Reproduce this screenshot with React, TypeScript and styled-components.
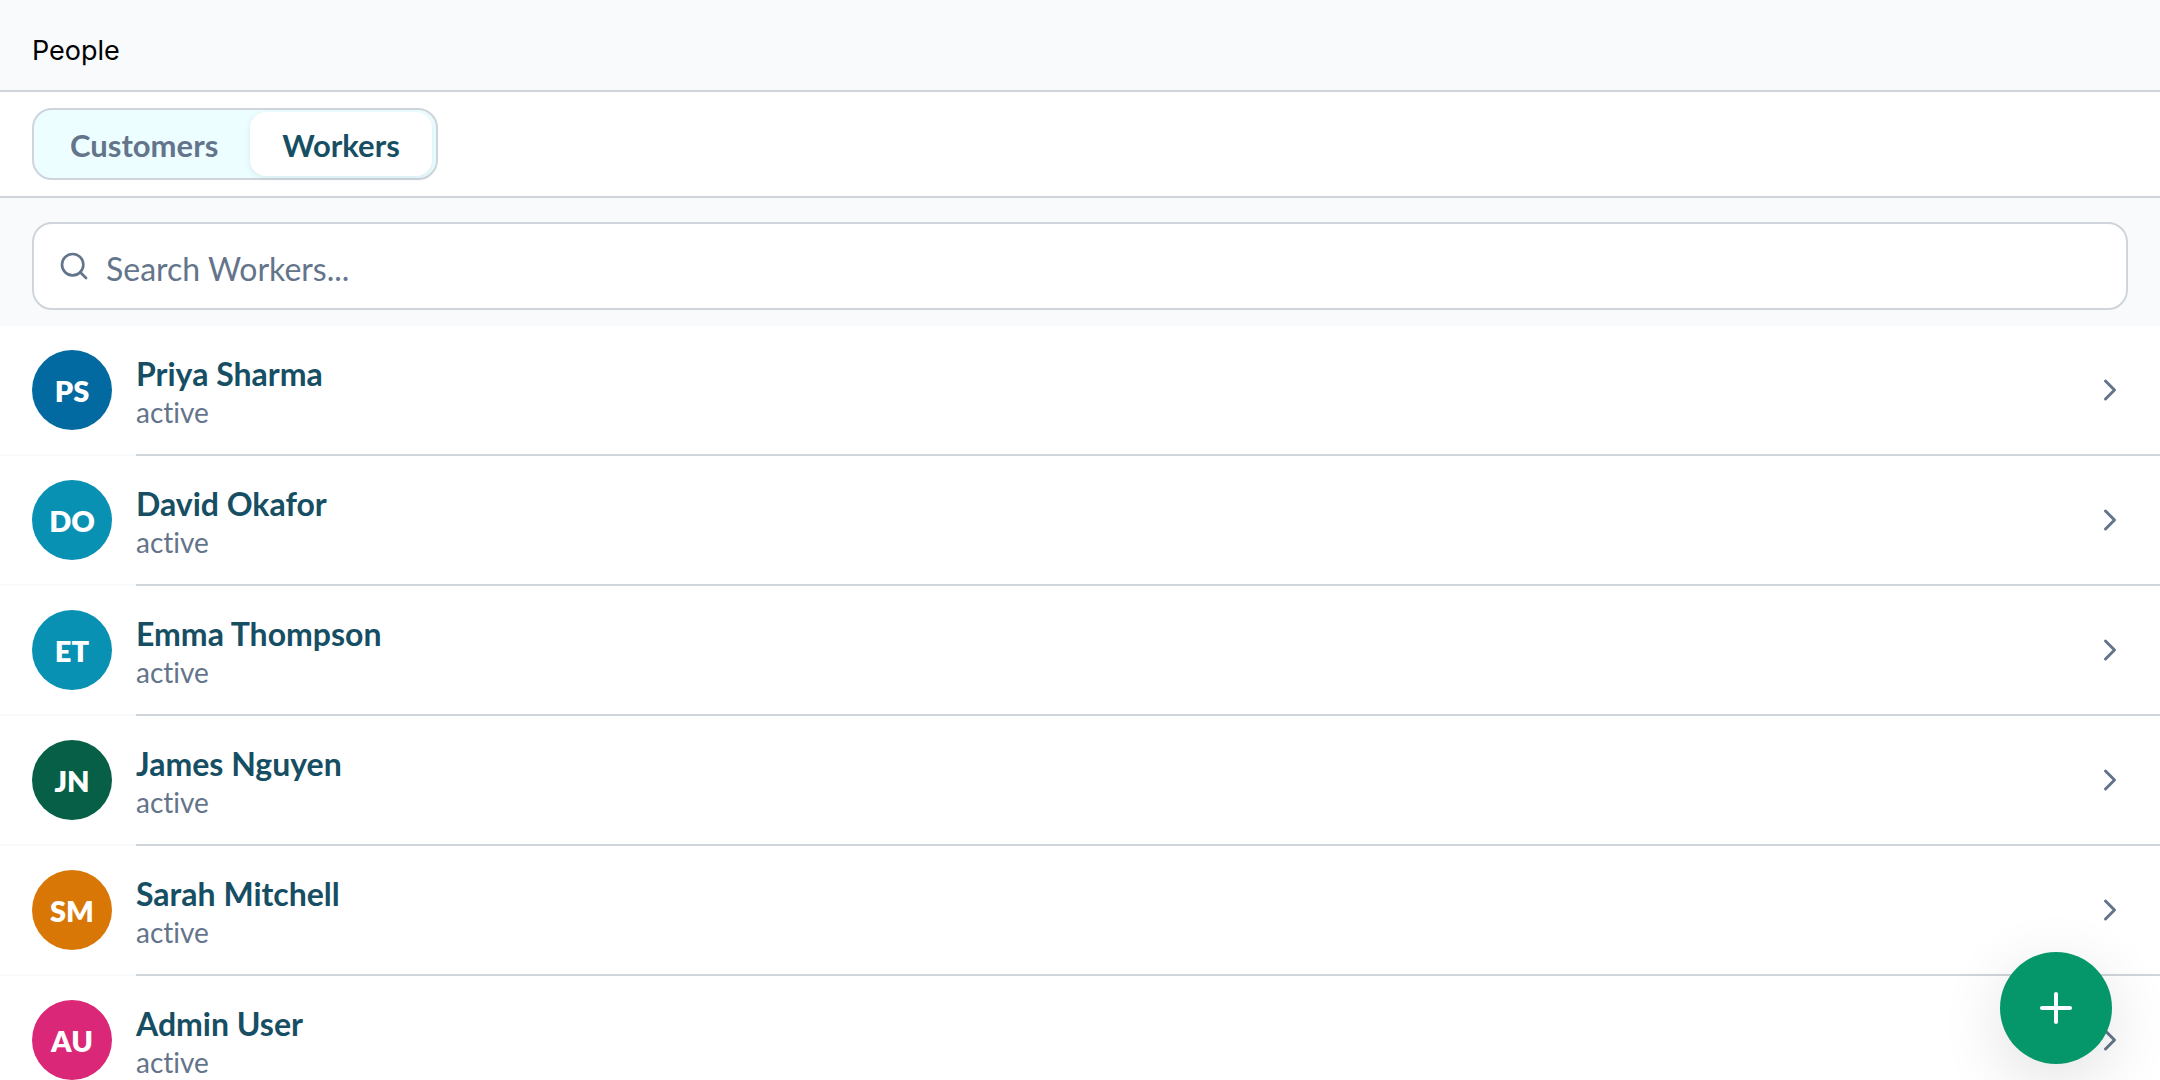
import React, { useState } from "react";
import styled, { createGlobalStyle } from "styled-components";
import { ChevronRight, Plus, Search } from "lucide-react";

const color = {
  page: "#f8fafc",
  surface: "#ffffff",
  line: "#d0d4db",
  ink: "#164e63",
  muted: "#64748b",
  tint: "#ecfeff",
  action: "#059669",
};

const GlobalStyle = createGlobalStyle`
  *, *::before, *::after { box-sizing: border-box; }
  body {
    margin: 0;
    background: ${color.page};
    font-family: Lato, "Liberation Sans", sans-serif;
    -webkit-font-smoothing: antialiased;
  }
  button, input {
    font-family: inherit;
    font-variant-ligatures: none;
  }
`;

const Screen = styled.div`
  display: flex;
  flex-direction: column;
  height: 100vh;
  overflow: hidden;
`;

const Header = styled.header`
  padding: 33px 32px 21px;
  border-bottom: 2px solid ${color.line};
`;

const Title = styled.h1`
  margin: 0;
  font-family: Inter, "Liberation Sans", sans-serif;
  font-size: 27px;
  font-weight: 400;
  line-height: 36px;
  color: #000;
`;

const TabBar = styled.nav`
  display: flex;
  padding: 16px 32px;
  background: ${color.surface};
  border-bottom: 2px solid ${color.line};
`;

const Segments = styled.div`
  display: flex;
  padding: 2px 4px;
  background: ${color.tint};
  border: 2px solid ${color.line};
  border-radius: 20px;
`;

const Segment = styled.button<{ $active: boolean }>`
  height: 64px;
  padding: 2px 32px 0;
  border: 0;
  border-radius: 16px;
  background: ${(p) => (p.$active ? color.surface : "transparent")};
  box-shadow: ${(p) => (p.$active ? "0 2px 6px rgba(22, 78, 99, 0.1)" : "none")};
  color: ${(p) => (p.$active ? color.ink : color.muted)};
  font-size: 31px;
  font-weight: 700;
  line-height: 36px;
  cursor: pointer;
`;

const SearchArea = styled.div`
  padding: 24px 32px 16px;
`;

const SearchBox = styled.label`
  display: flex;
  align-items: center;
  gap: 16px;
  height: 88px;
  padding: 0 24px;
  background: ${color.surface};
  border: 2px solid ${color.line};
  border-radius: 20px;
  color: ${color.muted};
`;

const SearchInput = styled.input`
  flex: 1;
  min-width: 0;
  padding: 6px 0 0;
  border: 0;
  outline: 0;
  background: transparent;
  color: ${color.ink};
  font-size: 32px;
  line-height: 40px;
  &::placeholder {
    color: ${color.muted};
    opacity: 1;
  }
`;

const List = styled.ul`
  flex: 1;
  min-height: 0;
  margin: 0;
  padding: 0;
  overflow-y: auto;
  scrollbar-width: none;
  list-style: none;
`;

const Item = styled.li`
  &:not(:last-child)::after {
    content: "";
    display: block;
    height: 2px;
    margin-left: 136px;
    background: ${color.line};
  }
`;

const Row = styled.button`
  display: flex;
  align-items: center;
  gap: 24px;
  width: 100%;
  height: 128px;
  padding: 0 32px;
  border: 0;
  background: ${color.surface};
  color: ${color.muted};
  text-align: left;
  cursor: pointer;
`;

const Avatar = styled.span<{ $fill: string }>`
  display: flex;
  flex: none;
  align-items: center;
  justify-content: center;
  width: 80px;
  height: 80px;
  border-radius: 50%;
  background: ${(p) => p.$fill};
  color: #fff;
  font-size: 29px;
  font-weight: 800;
`;

const Details = styled.span`
  display: flex;
  flex: 1;
  flex-direction: column;
  min-width: 0;
  padding-top: 4px;
`;

const Name = styled.span`
  color: ${color.ink};
  font-size: 32px;
  font-weight: 700;
  line-height: 40px;
`;

const Status = styled.span`
  font-size: 28px;
  line-height: 36px;
`;

const AddButton = styled.button`
  position: fixed;
  right: 48px;
  bottom: 16px;
  display: grid;
  place-items: center;
  width: 112px;
  height: 112px;
  padding: 0;
  border: 0;
  border-radius: 50%;
  background: ${color.action};
  box-shadow: 0 16px 64px rgba(0, 0, 0, 0.12);
  color: #fff;
  cursor: pointer;
`;

const tabs = ["Customers", "Workers"];

const workers = [
  { name: "Priya Sharma", initials: "PS", status: "active", fill: "#0369a1" },
  { name: "David Okafor", initials: "DO", status: "active", fill: "#0891b2" },
  { name: "Emma Thompson", initials: "ET", status: "active", fill: "#0891b2" },
  { name: "James Nguyen", initials: "JN", status: "active", fill: "#065f46" },
  { name: "Sarah Mitchell", initials: "SM", status: "active", fill: "#d97706" },
  { name: "Admin User", initials: "AU", status: "active", fill: "#db2777" },
];

export default function App() {
  const [tab, setTab] = useState("Workers");
  const [query, setQuery] = useState("");
  const shown = workers.filter((w) => w.name.toLowerCase().includes(query.toLowerCase()));

  return (
    <>
      <GlobalStyle />
      <Screen>
        <Header>
          <Title>People</Title>
        </Header>
        <TabBar>
          <Segments>
            {tabs.map((t) => (
              <Segment key={t} type="button" $active={t === tab} aria-pressed={t === tab} onClick={() => setTab(t)}>
                {t}
              </Segment>
            ))}
          </Segments>
        </TabBar>
        <SearchArea>
          <SearchBox>
            <Search size={32} aria-hidden />
            <SearchInput
              type="text"
              aria-label={`Search ${tab}`}
              placeholder={`Search ${tab}...`}
              value={query}
              onChange={(e) => setQuery(e.target.value)}
            />
          </SearchBox>
        </SearchArea>
        <List>
          {shown.map((w) => (
            <Item key={w.name}>
              <Row type="button">
                <Avatar $fill={w.fill}>{w.initials}</Avatar>
                <Details>
                  <Name>{w.name}</Name>
                  <Status>{w.status}</Status>
                </Details>
                <ChevronRight size={36} aria-hidden />
              </Row>
            </Item>
          ))}
        </List>
        <AddButton type="button" aria-label="Add person">
          <Plus size={48} aria-hidden />
        </AddButton>
      </Screen>
    </>
  );
}
